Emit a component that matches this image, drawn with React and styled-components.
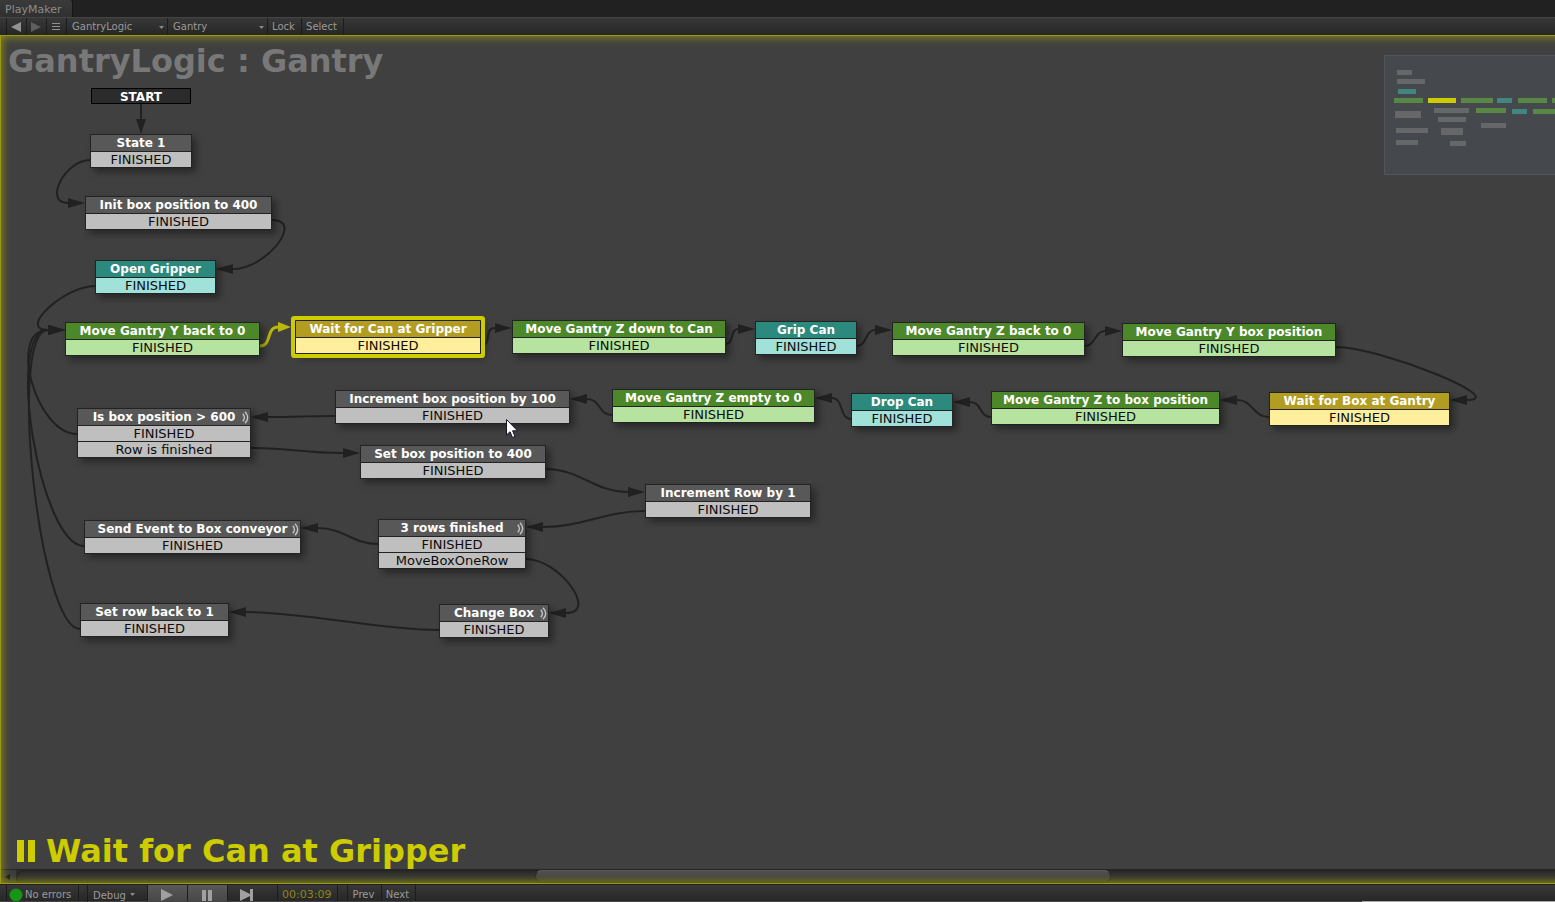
import React from "react";
import styled, { createGlobalStyle } from "styled-components";

const GlobalStyle = createGlobalStyle`
  * { box-sizing: border-box; }
  body { margin: 0; background: #404040; }
  button, select { font: inherit; color: inherit; border: 0; border-radius: 0; margin: 0; background: none; }
`;

const THEMES = {
  gray: { head: "#585858", event: "#bfbfbf" },
  teal: { head: "#2c897d", event: "#a0e1d9" },
  green: { head: "#4c8729", event: "#b6e3a0" },
  gold: { head: "#b29d22", event: "#ffee9b" },
};

const NODES = [
  { x: 90, y: 99, w: 102, title: "State 1" },
  { x: 85, y: 161, w: 187, title: "Init box position to 400" },
  { x: 95, y: 225, w: 121, title: "Open Gripper", theme: "teal" },
  { x: 65, y: 287, w: 195, title: "Move Gantry Y back to 0", theme: "green" },
  { x: 295, y: 285, w: 186, title: "Wait for Can at Gripper", theme: "gold", active: true },
  { x: 512, y: 285, w: 214, title: "Move Gantry Z down to Can", theme: "green" },
  { x: 755, y: 286, w: 102, title: "Grip Can", theme: "teal" },
  { x: 892, y: 287, w: 193, title: "Move Gantry Z back to 0", theme: "green" },
  { x: 1122, y: 288, w: 214, title: "Move Gantry Y box position", theme: "green" },
  { x: 1269, y: 357, w: 181, title: "Wait for Box at Gantry", theme: "gold" },
  { x: 991, y: 356, w: 229, title: "Move Gantry Z to box position", theme: "green" },
  { x: 851, y: 358, w: 102, title: "Drop Can", theme: "teal" },
  { x: 612, y: 354, w: 203, title: "Move Gantry Z empty to 0", theme: "green" },
  { x: 335, y: 355, w: 235, title: "Increment box position by 100" },
  { x: 77, y: 373, w: 174, title: "Is box position > 600", sends: true, events: ["FINISHED", "Row is finished"] },
  { x: 360, y: 410, w: 186, title: "Set box position to 400" },
  { x: 645, y: 449, w: 166, title: "Increment Row by 1" },
  { x: 378, y: 484, w: 148, title: "3 rows finished", sends: true, events: ["FINISHED", "MoveBoxOneRow"] },
  { x: 84, y: 485, w: 217, title: "Send Event to Box conveyor", sends: true },
  { x: 439, y: 569, w: 110, title: "Change Box", sends: true },
  { x: 80, y: 568, w: 149, title: "Set row back to 1" },
];

/* from: [x, y, direction], to: arrow tip [x, y, direction of travel] */
const LINKS = [
  { from: [90, 125, -1], to: [85, 168, 1], reach: 25 },
  { from: [272, 185, 1], to: [216, 234, -1], reach: 33 },
  { from: [95, 251, -1], to: [65, 295, 1], reach: 31 },
  { from: [77, 399, -1], to: [65, 295, 1], reach: 41 },
  { from: [84, 511, -1], to: [65, 295, 1], reach: 44 },
  { from: [80, 594, -1], to: [65, 295, 1], reach: 41 },
  { from: [260, 311, 1], to: [295, 292, 1], reach: 12, active: true },
  { from: [481, 310, 1], to: [512, 293, 1], reach: 12 },
  { from: [726, 309, 1], to: [755, 294, 1], reach: 8 },
  { from: [857, 311, 1], to: [892, 295, 1], reach: 10 },
  { from: [1085, 311, 1], to: [1122, 296, 1], reach: 10 },
  { from: [1336, 312, 1], to: [1450, 365, -1], reach: 44 },
  { from: [1269, 382, -1], to: [1220, 365, -1], reach: 16 },
  { from: [991, 382, -1], to: [953, 367, -1], reach: 12 },
  { from: [851, 384, -1], to: [815, 363, -1], reach: 12 },
  { from: [612, 380, -1], to: [570, 364, -1], reach: 14 },
  { from: [335, 381, -1], to: [251, 382, -1], reach: 30 },
  { from: [251, 413, 1], to: [360, 418, 1], reach: 40 },
  { from: [546, 434, 1], to: [645, 457, 1], reach: 34 },
  { from: [645, 476, -1], to: [526, 492, -1], reach: 40 },
  { from: [378, 509, -1], to: [301, 493, -1], reach: 26 },
  { from: [526, 524, 1], to: [549, 578, -1], reach: 33 },
  { from: [439, 595, -1], to: [229, 577, -1], reach: 60 },
];

const MAP_COLORS = { gray: "#666769", teal: "#43857f", green: "#588746", yellow: "#cccc00" };
const MAP = [
  [12, 14, 15, 5, "gray"], [12, 23, 28, 5, "gray"], [13, 33, 18, 5, "teal"],
  [9, 42, 29, 5, "green"], [43, 42, 28, 5, "yellow"], [76, 42, 32, 5, "green"],
  [112, 42, 15, 5, "teal"], [133, 42, 29, 5, "green"], [167, 42, 29, 5, "green"],
  [49, 52, 35, 5, "gray"], [91, 52, 30, 5, "green"], [127, 53, 15, 5, "teal"],
  [148, 53, 34, 5, "green"], [10, 55, 26, 7, "gray"], [53, 61, 28, 5, "gray"],
  [96, 67, 25, 5, "gray"], [11, 72, 32, 5, "gray"], [56, 72, 22, 7, "gray"],
  [11, 84, 22, 5, "gray"], [65, 85, 16, 5, "gray"],
];

const Page = styled.div`
  display: flex;
  flex-direction: column;
  min-height: 100vh;
  overflow: hidden;
  font: 10px/16px "DejaVu Sans", Verdana, sans-serif;
  color: #9a9a9a;
`;

const TabBar = styled.header`
  display: flex;
  height: 17px;
  background: #212121;
`;

const Tab = styled.button`
  padding: 2px 11px 0 5px;
  font-size: 11px;
  line-height: 15px;
  color: #8c8c8c;
  background: linear-gradient(#3a3a3a, #303030);
  border-right: 1px solid #161616;
  border-top-right-radius: 3px;
`;

const Toolbar = styled.div`
  display: flex;
  height: 18px;
  padding-left: 6px;
  border-top: 1px solid #444;
  background: linear-gradient(#383838, #262626);
`;

const StatusBar = styled(Toolbar)`
  border-top-color: #222;
`;

const ToolButton = styled.button`
  display: flex;
  align-items: center;
  justify-content: center;
  width: ${(p) => p.$w}px;
  padding: ${(p) => (p.$low ? "3px 2px 0 0" : "0 2px 0 0")};
  border-left: 1px solid #1c1c1c;
  background: ${(p) => (p.$on ? "linear-gradient(#585858, #474747)" : "none")};
  &:last-child { border-right: 1px solid #1c1c1c; width: ${(p) => p.$w + 1}px; }
`;

const Dropdown = styled.label`
  position: relative;
  display: flex;
  width: ${(p) => p.$w}px;
  padding-top: ${(p) => (p.$low ? 2 : 0)}px;
  border-left: 1px solid #1c1c1c;
  select {
    appearance: none;
    width: 100%;
    padding: 1px 12px 0 5px;
    line-height: 16px;
    outline: 0;
  }
  svg { position: absolute; right: 3px; bottom: 5px; pointer-events: none; }
`;

const Readout = styled.div`
  display: flex;
  align-items: center;
  width: ${(p) => p.$w}px;
  gap: 2px;
  padding: 3px 0 0 ${(p) => (p.$time ? 4 : 2)}px;
  border-left: 1px solid #1c1c1c;
  border-right: 1px solid #1c1c1c;
  color: ${(p) => (p.$time ? "#8f8613" : "inherit")};
  font-size: ${(p) => (p.$time ? 11 : 10)}px;
`;

const Spacer = styled.div`
  width: ${(p) => p.$w}px;
`;

const Canvas = styled.main`
  position: relative;
  flex: 1;
  display: flex;
  flex-direction: column;
  overflow: hidden;
  background: #404040;
`;

const Graph = styled.div`
  position: relative;
  flex: 1;
  min-height: 640px;
`;

const Glow = styled.div`
  position: absolute;
  inset: 0 -12px 0 0;
  border: 1px solid #9b9a14;
  box-shadow: inset 0 0 8px 1px rgba(170, 170, 0, 0.75);
  pointer-events: none;
`;

const Heading = styled.h1`
  margin: 0;
  padding: 6px 8px;
  font-size: 32px;
  line-height: 40px;
  color: #787878;
`;

const CurrentState = styled.div`
  position: absolute;
  left: 17px;
  bottom: 0;
  display: flex;
  align-items: center;
  gap: 11px;
  font-weight: bold;
  font-size: 32px;
  line-height: 36px;
  color: #cccc00;
`;

const Wires = styled.svg`
  position: absolute;
  left: 0;
  top: 0;
  width: 100%;
  height: 100%;
`;

const Node = styled.article`
  position: absolute;
  left: ${(p) => p.$x}px;
  top: ${(p) => p.$y}px;
  width: ${(p) => p.$w}px;
  border: 1px solid #232323;
  text-align: center;
  box-shadow: ${(p) => (p.$active ? "0 0 0 4px #cccc00, " : "")}4px 4px 7px rgba(0, 0, 0, 0.4);
  border-radius: ${(p) => (p.$active ? 1 : 0)}px;
`;

const NodeTitle = styled.h2`
  position: relative;
  margin: 0;
  height: 16px;
  font-size: 12px;
  line-height: 16px;
  white-space: nowrap;
  color: #fff;
  background: ${(p) => p.$color};
  svg { position: absolute; right: 1px; top: 2px; }
`;

const NodeEvent = styled.div`
  height: 16px;
  border-top: 1px solid #232323;
  font-size: 13px;
  line-height: 15px;
  color: #0c0c0c;
  background: ${(p) => p.$color};
`;

const StartNode = styled.div`
  position: absolute;
  left: 91px;
  top: 53px;
  width: 100px;
  height: 16px;
  border: 1px solid #000;
  background: #2b2b2b;
  color: #fff;
  font-size: 12px;
  font-weight: bold;
  line-height: 16px;
  text-align: center;
`;

const MiniMap = styled.aside`
  position: absolute;
  right: 0;
  top: 20px;
  width: 171px;
  height: 120px;
  border: 1px solid #51535e;
  border-right: 0;
  background: #45484c;
  svg { display: block; }
`;

const Pointer = styled.svg`
  position: absolute;
  left: 505px;
  top: 383px;
`;

const ScrollBar = styled.div`
  display: flex;
  height: 15px;
  border-top: 1px solid #262626;
  background: linear-gradient(#2c2c2c, #3a3a3a);
`;

const ScrollArrow = styled.button`
  display: flex;
  align-items: center;
  width: 16px;
  padding: 0 0 0 5px;
  background: #3c3c3c;
`;

const ScrollTrack = styled.div`
  flex: 1;
  padding: 0 444px 0 519px;
  border-radius: 7px 0 0 7px;
  box-shadow: inset 1px 1px 2px #222;
`;

const ScrollThumb = styled.div`
  height: 13px;
  border: 1px solid #2a2a2a;
  border-top-color: #5a5a5a;
  border-radius: 7px;
  background: linear-gradient(#505050, #3c3c3c);
`;

const Edge = styled.div`
  display: flex;
  justify-content: flex-end;
  height: 1px;
  margin-top: -1px;
  background: #444;
  &::after { content: ""; width: 193px; background: #a8a8a8; }
`;

function Caret() {
  return <svg width="5" height="4"><path d="M0 0h5L2.5 3z" fill="#8a8a8a" /></svg>;
}

function Picker({ label, value, w, low }) {
  return (
    <Dropdown $w={w} $low={low}>
      <select aria-label={label} defaultValue={value}><option>{value}</option></select>
      <Caret />
    </Dropdown>
  );
}

function SignalIcon() {
  return (
    <svg width="7" height="13" viewBox="0 0 7 13" fill="none" stroke="#c8c8c8" strokeWidth="1.3">
      <path d="M.8 2.8Q4 6.5 .8 10.2M3 .8Q8.4 6.5 3 12.2" />
    </svg>
  );
}

function Link({ from, to, reach, active }) {
  const [x1, y1, d1] = from;
  const [x2, y2, d2] = to;
  const tip = active ? x2 - 4 : x2;
  const base = x2 - 17 * d2;
  const color = active ? "#b8b80a" : "#212121";
  return (
    <g>
      <path
        d={`M${x1} ${y1}C${x1 + reach * d1} ${y1} ${base - reach * d2} ${y2} ${base} ${y2}`}
        fill="none" stroke={color} strokeWidth={active ? 3 : 2}
      />
      <path d={`M${tip} ${y2}L${base} ${y2 - 5}V${y2 + 5}Z`} fill={color} />
    </g>
  );
}

function StateNode({ x, y, w, title, theme = "gray", active, sends, events = ["FINISHED"] }) {
  const colors = THEMES[theme];
  return (
    <Node $x={x} $y={y} $w={w} $active={active}>
      <NodeTitle $color={colors.head}>{title}{sends && <SignalIcon />}</NodeTitle>
      {events.map((e) => <NodeEvent key={e} $color={colors.event}>{e}</NodeEvent>)}
    </Node>
  );
}

export default function App() {
  return (
    <Page>
      <GlobalStyle />
      <TabBar><Tab>PlayMaker</Tab></TabBar>
      <Toolbar>
        <ToolButton $w={20} aria-label="Back"><svg width="10" height="10"><path d="M0 5L10 0V10Z" fill="#929292" /></svg></ToolButton>
        <ToolButton $w={20} aria-label="Forward"><svg width="10" height="10"><path d="M10 5L0 0V10Z" fill="#5e5e5e" /></svg></ToolButton>
        <ToolButton $w={20} aria-label="Recent"><svg width="8" height="8"><path d="M0 .5H8M0 3.5H8M0 6.5H8" stroke="#929292" /></svg></ToolButton>
        <Picker label="Object" value="GantryLogic" w={101} />
        <Picker label="State machine" value="Gantry" w={100} />
        <ToolButton $w={34}>Lock</ToolButton>
        <ToolButton $w={42}>Select</ToolButton>
      </Toolbar>

      <Canvas>
        <Graph>
          <Heading>GantryLogic : Gantry</Heading>
          <Wires>
            <path d="M141 69V86" stroke="#212121" strokeWidth="2" />
            <path d="M136 84H146L141 99Z" fill="#212121" />
            {LINKS.map((link, i) => <Link key={i} {...link} />)}
          </Wires>
          <StartNode>START</StartNode>
          {NODES.map((node) => <StateNode key={node.title} {...node} />)}
          <MiniMap aria-label="Overview">
            <svg width="170" height="118">
              {MAP.map(([x, y, w, h, c], i) => <rect key={i} x={x} y={y} width={w} height={h} fill={MAP_COLORS[c]} />)}
            </svg>
          </MiniMap>
          <CurrentState>
            <svg width="18" height="22"><path d="M0 0H7V22H0ZM11 0H18V22H11Z" fill="#cccc00" /></svg>
            Wait for Can at Gripper
          </CurrentState>
          <Pointer width="14" height="22" viewBox="0 0 14 22">
            <path d="M1.5 1.5V17L5 13.8L7.5 19.5L10 18.4L7.6 12.8H12.5Z" fill="#fff" stroke="#15152a" />
          </Pointer>
        </Graph>
        <ScrollBar>
          <ScrollArrow aria-label="Scroll left"><svg width="5" height="6"><path d="M0 3L5 0V6Z" fill="#151515" /></svg></ScrollArrow>
          <ScrollTrack><ScrollThumb /></ScrollTrack>
        </ScrollBar>
        <Glow />
      </Canvas>

      <StatusBar as="footer">
        <Readout $w={73}>
          <svg width="14" height="14"><circle cx="7" cy="7" r="6.5" fill="#149614" /></svg>
          No errors
        </Readout>
        <Spacer $w={8} />
        <Picker label="Debug" value="Debug" w={51} low />
        <Spacer $w={9} />
        <ToolButton $w={40} $on $low aria-label="Play"><svg width="12" height="12"><path d="M0 0L12 6L0 12Z" fill="#a0a0a0" /></svg></ToolButton>
        <ToolButton $w={40} $on $low aria-label="Pause"><svg width="10" height="11"><path d="M0 0H4V11H0ZM6 0H10V11H6Z" fill="#a0a0a0" /></svg></ToolButton>
        <ToolButton $w={40} $low aria-label="Step"><svg width="13" height="12"><path d="M0 0L10 5V0H13V12H10V7L0 12Z" fill="#a0a0a0" /></svg></ToolButton>
        <Spacer $w={10} />
        <Readout $w={61} $time>00:03:09</Readout>
        <Spacer $w={9} />
        <ToolButton $w={34} $low>Prev</ToolButton>
        <ToolButton $w={34} $low>Next</ToolButton>
      </StatusBar>
      <Edge />
    </Page>
  );
}
